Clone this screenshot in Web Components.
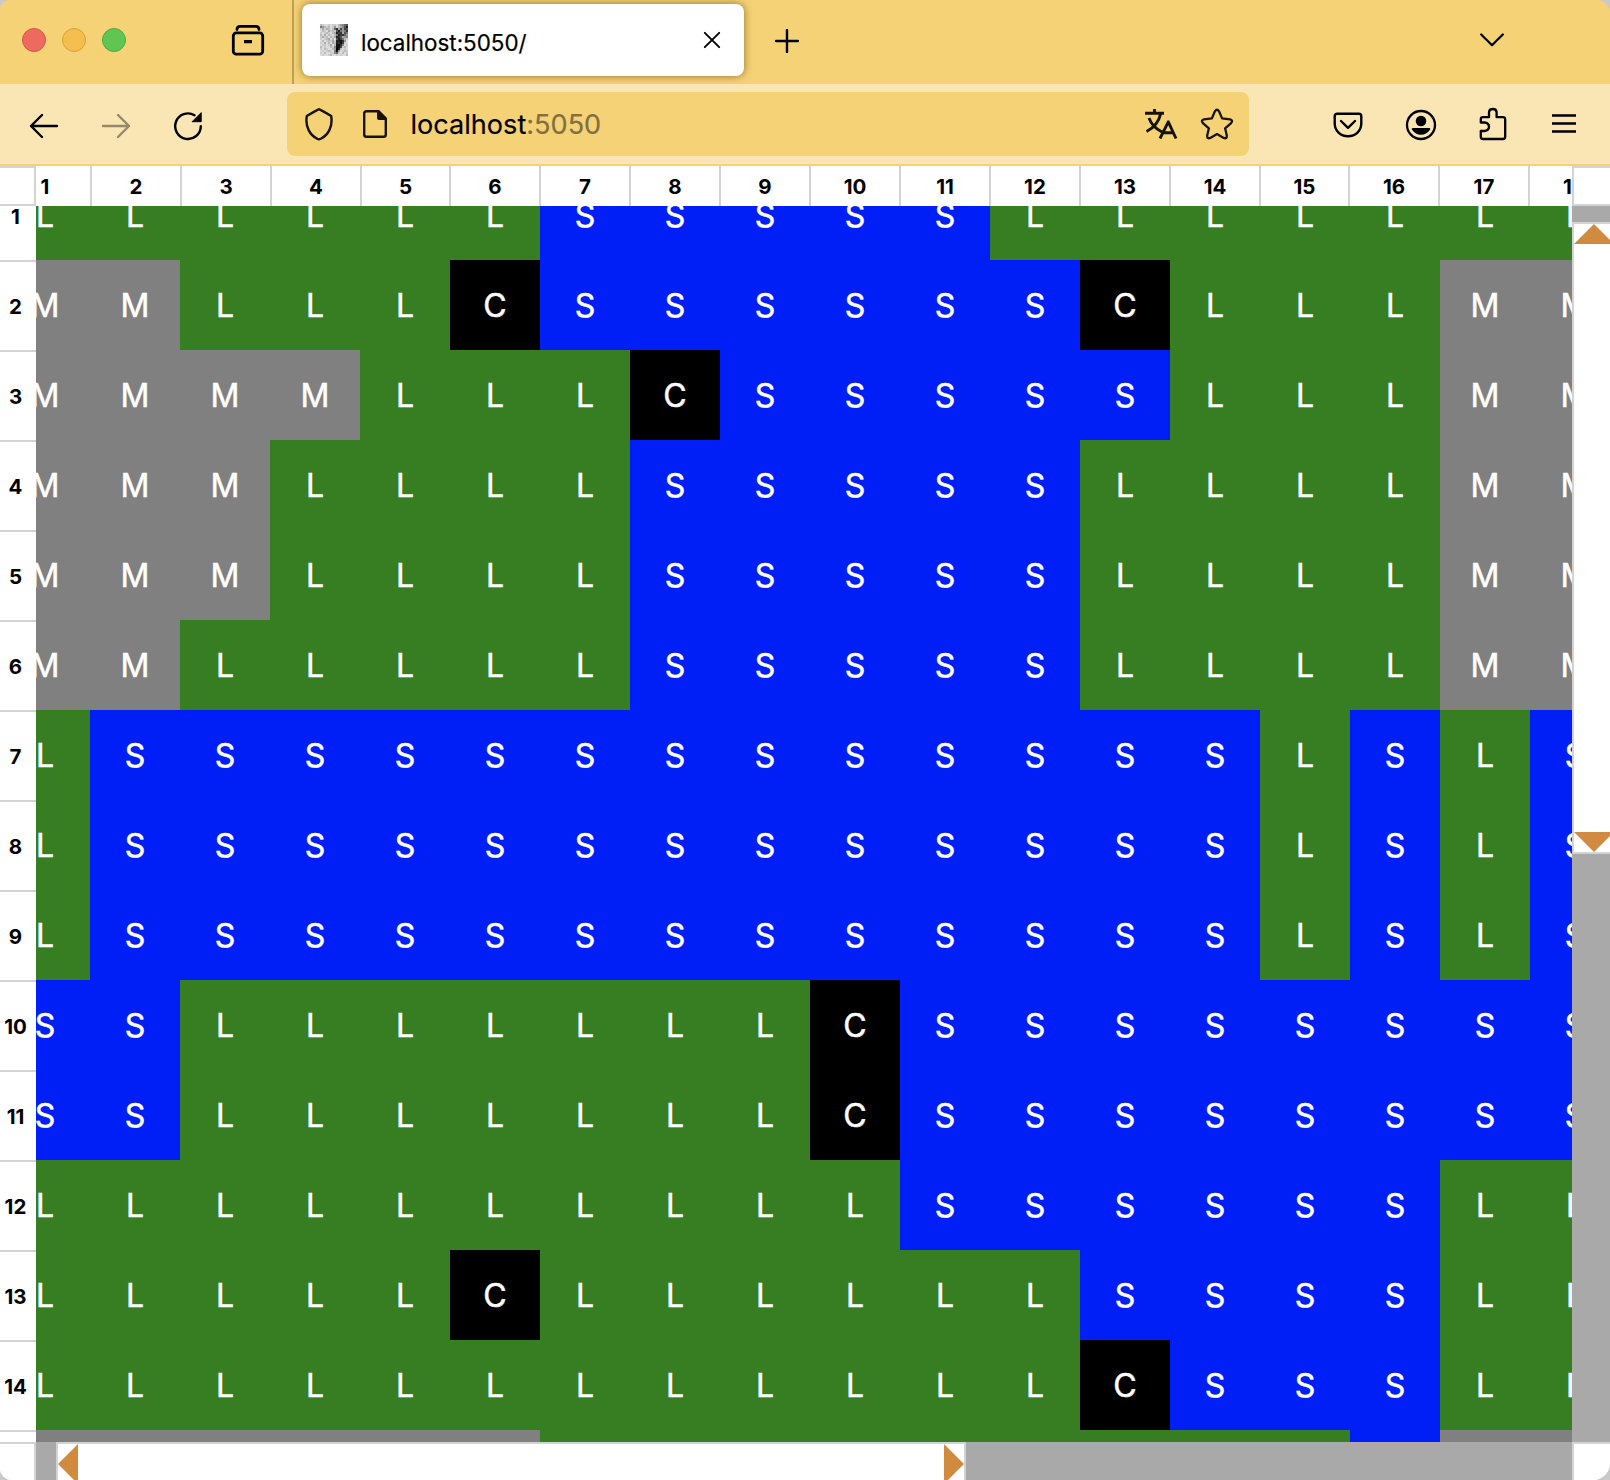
<!DOCTYPE html>
<html lang="en">
<head>
<meta charset="utf-8">
<title>localhost:5050/</title>
<style>
html,body{margin:0;height:100%;overflow:hidden;background:#c9c9c9;font-family:Inter,"Liberation Sans",sans-serif}
</style>
</head>
<body>
<browser-window></browser-window>
<script>
const paths = {
  library: ['0 0 34 34', '<path d="M6 5.5Q6 2.3 9 2.3H25Q28 2.3 28 5.5" /><rect x="2.3" y="8.8" width="29.4" height="21.4" rx="3"/><path d="M13 17.6H21" stroke-width="3.2" stroke-linecap="butt"/>', 2.8],
  close: ['0 0 18 18', '<path d="M1.8 1.8L16.2 16.2M16.2 1.8L1.8 16.2"/>', 1.9],
  plus: ['0 0 24 24', '<path d="M12 1V23M1 12H23"/>', 2.4],
  down: ['0 0 24 14', '<path d="M1.2 1.5L12 12.3L22.8 1.5"/>', 2.3],
  back: ['0 0 30 26', '<path d="M28 13H2M13 2L2 13L13 24"/>', 2.4],
  forward: ['0 0 30 26', '<path d="M2 13H28M17 2L28 13L17 24"/>', 2.4],
  reload: ['0 0 30 30', '<path d="M21.5 4.2A12.8 12.8 0 1 0 27.8 15.2"/><path d="M28.2 2V10.7H19.5Z" fill="currentColor" stroke="currentColor" stroke-width="1"/>', 2.4],
  shield: ['0 0 30 34', '<path d="M15 2.2Q16 2.2 27.2 9C29 20 24 28 16.8 31.8Q15 32.8 13.2 31.8C6 28 1 20 2.8 9Q14 2.2 15 2.2Z"/>', 2.4],
  page: ['0 0 26 30', '<path d="M16 2.2H4.5Q2.2 2.2 2.2 4.5V25.5Q2.2 27.8 4.5 27.8H21.5Q23.8 27.8 23.8 25.5V10Z"/><path d="M15 1H17L25 9V11H17Q15 11 15 9Z" fill="currentColor" stroke="none"/>', 2.4],
  translate: ['0 0 34 32', '<path d="M1 5.3H20M10.5 1V6M16.8 5.3C14.5 15 9.5 20 2.5 23.5M5 10C7.5 17 12 21 18 24M16 30.5L24.3 13.8L32 30.5M19 24.8H30" stroke-linecap="butt"/>', 2.9],
  star: ['0 0 34 32', '<path d="M14.9 3.3Q17 .2 19 3.3L22.1 10.4L30.1 11.3Q33.5 12.3 31.1 15.1L25.1 20.3L26.8 27.6Q27 31.2 23.7 29.9L17 26.1L10.3 29.9Q7 31.2 7.2 27.6L8.9 20.3L2.9 15.1Q.5 12.3 3.9 11.3L11.9 10.4Z"/>', 2.3],
  pocket: ['0 0 30 26', '<path d="M4.2 1.7H25.8Q28.3 1.7 28.3 4.2V11C28.3 19 22.5 24.3 15 24.3S1.7 19 1.7 11V4.2Q1.7 1.7 4.2 1.7Z"/><path d="M8 9L15 15.8L22 9"/>', 2.4],
  account: ['0 0 32 32', '<circle cx="16" cy="16" r="14"/><g fill="currentColor" stroke="none"><circle cx="16" cy="12" r="5.3"/><path d="M8 19H24Q26 19 24.8 21Q21.5 25.7 16 25.7T7.2 21Q6 19 8 19Z"/></g>', 2.3],
  puzzle: ['0 0 28 34', '<path d="M3.8 10.2H10V5.3Q10.2 2 13.8 2T17.6 5.3V10.2H24Q26.2 10.2 26.2 12.4V29.8Q26.2 32 24 32H4Q1.8 32 1.8 29.8V24H5.5Q10 23.3 10 19.7T5.5 15.5H1.8V12.2Q1.8 10.2 3.8 10.2Z"/>', 2.3],
  menu: ['0 0 24 22', '<path d="M0 2.5H24M0 10.5H24M0 18.5H24" stroke-linecap="butt"/>', 2.3]
};

class UiIcon extends HTMLElement {
  connectedCallback() {
    const [box, body, weight] = paths[this.getAttribute('name')];
    const [, , w, h] = box.split(' ');
    this.attachShadow({mode: 'open'}).innerHTML = `<style>:host{display:block;flex:none;width:${w}px;height:${h}px}svg{display:block}</style>
      <svg width="${w}" height="${h}" viewBox="${box}" fill="none" stroke="currentColor" stroke-width="${weight}" stroke-linecap="round" stroke-linejoin="round">${body}</svg>`;
  }
}
customElements.define('ui-icon', UiIcon);

class SiteIcon extends HTMLElement {
  connectedCallback() {
    const shades = [
      'bcddcdccdb9865', '79bcbdc9dba852', 'cacabdb63a4945', 'dbcdacbc527973',
      'cdcbcdba243a57', 'bdadbcdb724369', 'cacbdbca235a98', 'cdcbadbd5247bc',
      'dbdcbcac22139d', 'cdadbdab2314cd', 'dccdcadb1138dc', 'bdcddbc8114cbd',
      'cdbcddb902bdcd', 'dcdcbcd719dcbc', 'cdbddcc86cdbdc', 'dcddcbddcdcddb'];
    const dots = shades.flatMap((row, y) => [...row].map((v, x) => `<rect x="${x}" y="${y}" width="1" height="1" fill="#${v}${v}${v}"/>`)).join('');
    this.attachShadow({mode: 'open'}).innerHTML = `<style>:host{display:block;width:28px;height:32px;flex:none}svg{display:block}</style><svg width="28" height="32" viewBox="0 0 14 16" shape-rendering="crispEdges">${dots}</svg>`;
  }
}
customElements.define('site-icon', SiteIcon);

class TabStrip extends HTMLElement {
  connectedCallback() {
    this.attachShadow({mode: 'open'}).innerHTML = `<style>
      :host{display:flex;height:84px;background:#f6d276;box-sizing:border-box;overflow:hidden}
      .lead{width:292px;border-right:2px solid #bda05a;display:flex;align-items:center;box-sizing:content-box;padding-bottom:4px;height:80px}
      .lights{display:flex;gap:16px;padding-left:22px;width:210px;box-sizing:border-box}
      .lights i{width:24px;height:24px;border-radius:50%;background:#ed6a5e;box-sizing:border-box;border:1px solid #d8554a}
      .lights i:nth-child(2){background:#f4bf4f;border-color:#d8a13c}
      .lights i:nth-child(3){background:#61c554;border-color:#4cac40}
      .lead ui-icon{margin-left:21px;margin-top:2px}
      .tab{margin:4px 0 0 8px;width:442px;height:72px;box-sizing:border-box;padding:0 23px 0 18px;background:#fff;border-radius:8px;box-shadow:0 0 8px rgba(90,65,0,.65);display:flex;align-items:center}
      .title{margin-left:13px;font-size:22.4px;line-height:30px;flex:1;padding-top:5px;-webkit-text-stroke:.2px currentColor}
      .plus{margin:29px 0 0 31px}
      .down{margin:33px 106px 0 auto}
    </style>
    <div class="lead"><div class="lights"><i></i><i></i><i></i></div><ui-icon name="library"></ui-icon></div>
    <div class="tab"><site-icon></site-icon><span class="title"><slot></slot></span><ui-icon name="close"></ui-icon></div>
    <ui-icon class="plus" name="plus"></ui-icon><ui-icon class="down" name="down"></ui-icon>`;
  }
}
customElements.define('tab-strip', TabStrip);

class NavBar extends HTMLElement {
  connectedCallback() {
    this.attachShadow({mode: 'open'}).innerHTML = `<style>
      :host{display:flex;height:82px;box-sizing:border-box;border-bottom:2px solid #f6d276;background:#fae6b4;align-items:center}
      .moves{display:flex;align-items:center;width:287px;box-sizing:border-box;padding:3px 0 0 29px;gap:42px}
      .moves :nth-child(2){opacity:.4}
      .address{width:962px;height:64px;box-sizing:border-box;border-radius:8px;background:#f6d276;display:flex;align-items:center;padding:0 15px 0 17px;color:#15130a}
      .address .page{margin-left:28px}
      .url{font-size:27.1px;line-height:34px;margin-left:22.5px;flex:1;color:#000;padding-top:1px;-webkit-text-stroke:.2px currentColor}
      .url span{color:#816f3f}
      .star{margin-left:22px}
      .tools{display:flex;align-items:center;flex:1;padding-left:84px}
      .tools :nth-child(1){margin-top:1px}
      .tools :nth-child(2){margin-left:42px;margin-top:2px}
      .tools :nth-child(3){margin-left:42px}
      .tools :nth-child(4){margin-left:45px}
    </style>
    <div class="moves"><ui-icon name="back"></ui-icon><ui-icon name="forward"></ui-icon><ui-icon name="reload"></ui-icon></div>
    <div class="address"><ui-icon name="shield"></ui-icon><ui-icon class="page" name="page"></ui-icon><div class="url">localhost<span>:5050</span></div><ui-icon name="translate"></ui-icon><ui-icon class="star" name="star"></ui-icon></div>
    <div class="tools"><ui-icon name="pocket"></ui-icon><ui-icon name="account"></ui-icon><ui-icon name="puzzle"></ui-icon><ui-icon name="menu"></ui-icon></div>`;
  }
}
customElements.define('nav-bar', NavBar);

class ColumnHeads extends HTMLElement {
  connectedCallback() {
    const cells = Array.from({length: 18}, (_, i) => `<b style="width:${i === 0 ? 56 : i === 4 || i === 14 ? 89 : 90}px">${i + 1}</b>`).join('');
    this.attachShadow({mode: 'open'}).innerHTML = `<style>
      :host{display:flex;overflow:hidden;background:#fff}
      b{flex:none;box-sizing:border-box;height:40px;border-right:2px solid #d3d3d3;font-size:20.5px;line-height:41px;text-align:center}
      b:first-of-type{text-align:left;padding-left:4.5px}
    </style>${cells}`;
  }
}
customElements.define('column-heads', ColumnHeads);

class RowHeads extends HTMLElement {
  connectedCallback() {
    const cells = Array.from({length: 15}, (_, i) => `<b>${i < 14 ? i + 1 : ''}</b>`).join('');
    this.attachShadow({mode: 'open'}).innerHTML = `<style>
      :host{display:block;overflow:hidden;background:#fff}
      b{display:block;box-sizing:border-box;width:36px;height:90px;border-bottom:2px solid #d3d3d3;font-size:20.5px;line-height:90px;text-align:center;padding-right:5px}
      b:first-of-type{height:56px;line-height:22px}
    </style>${cells}`;
  }
}
customElements.define('row-heads', RowHeads);

class TerrainMap extends HTMLElement {
  connectedCallback() {
    const rows = this.getAttribute('rows').split(' ');
    const cells = rows.map((row, y) => [...row].map(k => `<span class="${k}">${y < 14 ? k : ''}</span>`).join('')).join('');
    this.attachShadow({mode: 'open'}).innerHTML = `<style>
      :host{display:block;overflow:hidden}
      .grid{display:grid;grid-template-columns:repeat(18,90px);grid-auto-rows:90px;margin:-36px 0 0 -36px;color:#fff;font-size:32px;line-height:91px;text-align:center;width:1620px;-webkit-text-stroke:.5px #fff}
      .L{background:#377e22}.S{background:#001ff7}.M{background:#808080}.C{background:#000}
    </style><div class="grid">${cells}</div>`;
  }
}
customElements.define('terrain-map', TerrainMap);

class ScrollTrack extends HTMLElement {
  connectedCallback() {
    this.attachShadow({mode: 'open'}).innerHTML = `<style>
      :host{display:flex;overflow:hidden;background:#a9a9a9}
      .thumb{display:flex;justify-content:space-between;box-sizing:border-box;background:#fff;border:2px solid #d3d3d3;flex:none}
      svg{display:block;flex:none;fill:#d08b40}
      :host([axis=y]) .thumb{width:42px;height:632px;margin-top:16px;flex-direction:column;border-right:0}
      :host([axis=x]) .thumb{height:42px;width:910px;margin-left:20px;border-bottom:0}
    </style><div class="thumb">${this.getAttribute('axis') === 'y'
      ? '<svg width="40" height="20"><path d="M0 20L20 0L40 20Z"/></svg><svg width="40" height="20"><path d="M0 0H40L20 20Z"/></svg>'
      : '<svg width="20" height="40"><path d="M20 0V40L0 20Z"/></svg><svg width="20" height="40"><path d="M0 0V40L20 20Z"/></svg>'}</div>`;
  }
}
customElements.define('scroll-track', ScrollTrack);

class SheetView extends HTMLElement {
  connectedCallback() {
    const rows = ['LLLLLLSSSSSLLLLLLL', 'MMLLLCSSSSSSCLLLMM', 'MMMMLLLCSSSSSLLLMM', 'MMMLLLLSSSSSLLLLMM', 'MMMLLLLSSSSSLLLLMM', 'MMLLLLLSSSSSLLLLMM',
      'LSSSSSSSSSSSSSLSLS', 'LSSSSSSSSSSSSSLSLS', 'LSSSSSSSSSSSSSLSLS', 'SSLLLLLLLCSSSSSSSS', 'SSLLLLLLLCSSSSSSSS', 'LLLLLLLLLLSSSSSSLL', 'LLLLLCLLLLLLSSSSLL', 'LLLLLLLLLLLLCSSSLL', 'MMMMMMLLLLLLLLLSMM'];
    this.attachShadow({mode: 'open'}).innerHTML = `<style>
      :host{display:grid;grid-template-columns:36px 1536px 38px;grid-template-rows:40px 1236px 38px;background:#fff;overflow:hidden}
      i{box-sizing:border-box;background:#fff;border:0 solid #d3d3d3}
      .tl{border-width:2px 2px 2px 0}.tr{border-width:2px 0 2px 2px}.bl{border-width:2px 2px 0 0}.br{border-width:2px 0 0 2px}
    </style>
    <i class="tl"></i><column-heads></column-heads><i class="tr"></i>
    <row-heads></row-heads><terrain-map rows="${rows.join(' ')}"></terrain-map><scroll-track axis="y"></scroll-track>
    <i class="bl"></i><scroll-track axis="x"></scroll-track><i class="br"></i>`;
  }
}
customElements.define('sheet-view', SheetView);

class BrowserWindow extends HTMLElement {
  connectedCallback() {
    this.attachShadow({mode: 'open'}).innerHTML = `<style>
      :host{display:flex;flex-direction:column;width:1610px;height:1480px;overflow:hidden;border-radius:9px 13px 17px 12px;color:#000}
    </style><tab-strip>localhost:5050/</tab-strip><nav-bar></nav-bar><sheet-view></sheet-view>`;
  }
}
customElements.define('browser-window', BrowserWindow);
</script>
</body>
</html>
